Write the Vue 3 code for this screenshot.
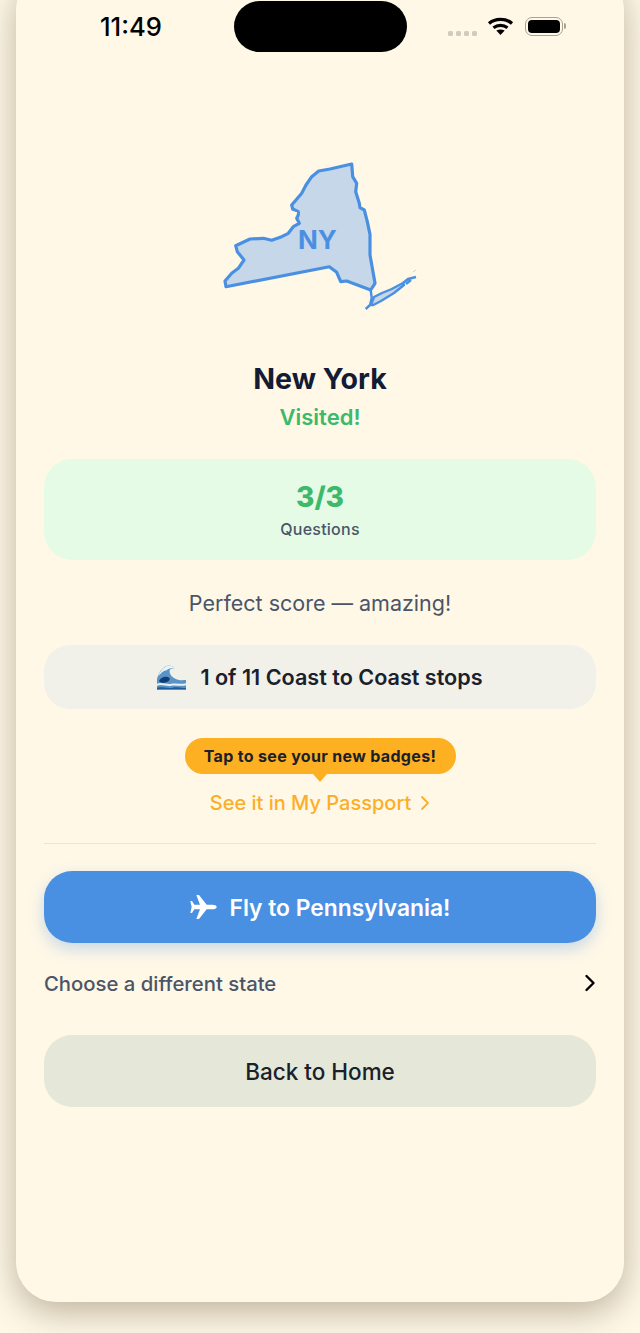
<template>
  <div class="page">
    <div class="phone">
      <div class="status-bar">
        <span class="time">11:49</span>
        <div class="island"></div>
        <div class="status-icons">
          <div class="dots"><i></i><i></i><i></i><i></i></div>
          <svg class="wifi" viewBox="0 0 27 18" fill="none" stroke="#000" stroke-width="3.2">
            <path d="M2 6.5C8 1 19 1 25 6.5" />
            <path d="M6.5 10.8C10.5 7.6 16.5 7.6 20.5 10.8" />
            <path d="M13.5 18L9.3 13.6C12 12 15 12 17.7 13.6Z" fill="#000" stroke="none" />
          </svg>
          <div class="battery"><div class="battery-fill"></div></div>
          <div class="battery-cap"></div>
        </div>
      </div>

      <div class="map">
        <svg viewBox="0 0 220 170" class="map-svg">
          <path
            class="state"
            d="M141.7 14L120 19L108.7 21L101.7 26.7L96 35L91.7 43.3L86 50L81.7 55L82.7 59L88.3 61.7L88.3 65L86.7 68.3L89.3 73.3L83.3 76.7L78.3 83.3L71.7 86.7L61.7 90.3L53.3 88.3L40 89L25.7 95.7L27.3 101.7L34 110L28.3 118.3L21.7 123.3L15 131L16 136.7L119.3 116.7L126.7 122.3L130.7 131.7L136.7 131L160.7 140L165 133.3L160 105L160 84.3L157.3 71.7L154.3 60L150 57.7L149.3 53.3L145.7 41.7L146.7 33.3L142.7 26.7Z"
          />
          <path class="island-fill" d="M161 155L164 147L172 143L181.7 139L193 133L194 135L184 143L171 151L163.3 155Z" />
          <path class="state-line" d="M193 133L198 129L206 127M196 134L201 130" />
          <path class="state-line" d="M160.7 140L161.7 148L160 155L155.7 159" />
          <path d="M78 61L87 63" stroke="#fff8e7" stroke-width="1.5" fill="none" />
          <path d="M203 122L206 120" stroke="#4a90e2" stroke-opacity="0.35" stroke-width="1" fill="none" />
        </svg>
        <span class="map-label">NY</span>
      </div>

      <h1 class="state-name">New York</h1>
      <p class="visited">Visited!</p>

      <div class="score">
        <div class="score-num">3/3</div>
        <div class="score-label">Questions</div>
      </div>

      <p class="message">Perfect score — amazing!</p>

      <div class="stops">
        <svg class="wave" viewBox="0 0 30 25">
          <path d="M0 25V14C2 7 6 1 12 0C15 0 17 1 18 3C15 2.5 13 4 13 6C13 10 17 14 23 15C26 15.5 28 15 30 15V25Z" fill="#5a94c6" />
          <path d="M1.5 11C3 6 7 1 12 0C15 0 17 1 18 3C15 2 12 3 10 5C7 5 4 8 1.5 11Z" fill="#eaf3f8" />
          <path d="M2 16C5 11 10 11 13 13C14 16 10 18 6 18C4 18 3 17 2 16Z" fill="#123c78" />
          <path d="M0 19C5 17 10 20 15 19C20 18 25 20 30 18.5V20.5C25 22 20 20 15 21C10 22 5 19 0 21Z" fill="#e6f1f8" />
          <path d="M0 23C6 21.5 10 24 16 23C21 22 26 24 30 23V25H0Z" fill="#1d5b9e" />
        </svg>
        <span>1 of 11 Coast to Coast stops</span>
      </div>

      <div class="tip">Tap to see your new badges!</div>
      <div class="passport">
        <span>See it in My Passport</span>
        <svg viewBox="0 0 10 16" class="passport-chev" fill="none" stroke="#FDAE27" stroke-width="1.8">
          <path d="M2 2L8 8L2 14" stroke-linecap="round" stroke-linejoin="round" />
        </svg>
      </div>

      <div class="divider"></div>

      <button class="fly">
        <svg viewBox="0 0 81 72" class="plane">
          <path fill="#fff" d="M80 36C80 31 74 29 66 29H50L27 0H19L30 29H13L6 18H1L5 36L1 54H6L13 43H30L19 72H27L50 43H66C74 43 80 41 80 36Z" />
        </svg>
        <span>Fly to Pennsylvania!</span>
      </button>

      <div class="choose">
        <span>Choose a different state</span>
        <svg viewBox="0 0 12 18" class="choose-chev" fill="none" stroke="#000" stroke-width="2.4">
          <path d="M2.5 2L9.5 9L2.5 16" stroke-linecap="round" stroke-linejoin="round" />
        </svg>
      </div>

      <button class="home">Back to Home</button>
    </div>
  </div>
</template>

<script setup>
</script>

<style>
html,
body {
  margin: 0;
  background: #fff8e7;
  overflow: hidden;
}
</style>

<style scoped>
.page {
  width: 640px;
  height: 1333px;
  overflow: hidden;
  background: #fff8e7;
  font-family: Inter, "Liberation Sans", sans-serif;
  color: #1a202c;
}

.phone {
  box-sizing: border-box;
  width: 608px;
  height: 1332px;
  margin: -30px 16px 0;
  padding: 31px 28px 0;
  background: #fff8e7;
  border-radius: 40px;
  box-shadow: 0 10px 34px rgba(60, 45, 15, 0.34);
  display: flex;
  flex-direction: column;
  align-items: center;
}

.status-bar {
  width: 100%;
  height: 51px;
  display: flex;
  align-items: center;
}

.time {
  width: 190px;
  padding-left: 56px;
  box-sizing: border-box;
  font-size: 25.6px;
  font-weight: 500;
  color: #000;
}

.island {
  width: 173px;
  height: 51px;
  border-radius: 26px;
  background: #000;
}

.status-icons {
  margin-left: 41px;
  display: flex;
  align-items: center;
}

.dots {
  display: flex;
  gap: 3px;
  margin-top: 13px;
  margin-right: 10px;
}

.dots i {
  width: 5px;
  height: 5px;
  border-radius: 1.5px;
  background: #d0cbbd;
}

.wifi {
  width: 27px;
  height: 18px;
  margin-right: 11px;
  margin-top: -1px;
}

.battery {
  box-sizing: border-box;
  width: 38px;
  height: 19px;
  padding: 2px;
  border: 1.5px solid #a8a294;
  border-radius: 7px;
  margin-top: -1px;
}

.battery-fill {
  height: 100%;
  border-radius: 4px;
  background: #000;
}

.battery-cap {
  width: 2px;
  height: 6px;
  margin-left: 1px;
  margin-top: -1px;
  border-radius: 0 2px 2px 0;
  background: #a8a294;
}

.map {
  position: relative;
  width: 220px;
  height: 170px;
  margin-top: 98px;
  margin-bottom: 39px;
  flex-shrink: 0;
}

.map-svg {
  display: block;
  width: 220px;
  height: 170px;
}

.state,
.island-fill {
  fill: #c6d7e9;
  stroke: #4a90e2;
  stroke-width: 3.2;
  stroke-linejoin: round;
}

.island-fill {
  stroke-width: 2.4;
}

.state-line {
  fill: none;
  stroke: #4a90e2;
  stroke-width: 2.4;
  stroke-linejoin: round;
}

.map-label {
  position: absolute;
  left: 88px;
  top: 75px;
  font-size: 26px;
  line-height: 30px;
  font-weight: 700;
  color: #4a90e2;
}

.state-name {
  margin: 0;
  font-size: 28.6px;
  line-height: 40px;
  font-weight: 700;
  color: #141b34;
}

.visited {
  margin: 0;
  font-size: 22px;
  line-height: 36px;
  font-weight: 600;
  color: #3cb96b;
}

.score {
  width: 100%;
  height: 101px;
  margin-top: 24px;
  box-sizing: border-box;
  padding-top: 21px;
  border-radius: 28px;
  background: #e6fbe6;
  text-align: center;
}

.score-num {
  font-size: 28px;
  line-height: 34px;
  font-weight: 800;
  color: #3cb96b;
}

.score-label {
  margin-top: 5px;
  font-size: 16px;
  line-height: 20px;
  font-weight: 500;
  letter-spacing: 0.25px;
  color: #4a5568;
}

.message {
  margin: 27px 0 0;
  font-size: 21.5px;
  line-height: 32px;
  color: #4a5568;
}

.stops {
  width: 100%;
  height: 64px;
  margin-top: 26px;
  border-radius: 26px;
  background: #f1f1e9;
  display: flex;
  align-items: center;
  justify-content: center;
  gap: 14px;
  font-size: 21.6px;
  font-weight: 600;
  color: #1a202c;
}

.wave {
  width: 29px;
  height: 25px;
}

.tip {
  position: relative;
  margin-top: 29px;
  width: 271px;
  height: 36px;
  border-radius: 18px;
  background: #fdb022;
  font-size: 16px;
  font-weight: 700;
  letter-spacing: 0.33px;
  line-height: 36px;
  text-align: center;
  color: #1a202c;
}

.tip::after {
  content: "";
  position: absolute;
  left: 50%;
  bottom: -8px;
  margin-left: -7px;
  border-left: 7px solid transparent;
  border-right: 7px solid transparent;
  border-top: 8px solid #fdb022;
}

.passport {
  margin-top: 16px;
  height: 26px;
  display: flex;
  align-items: center;
  gap: 9px;
  font-size: 20px;
  font-weight: 500;
  color: #fdae27;
}

.passport-chev {
  width: 10px;
  height: 16px;
}

.divider {
  width: 100%;
  height: 1px;
  margin-top: 27px;
  background: #ebe4d2;
}

.fly,
.home {
  width: 100%;
  height: 72px;
  flex-shrink: 0;
  border: 0;
  border-radius: 28px;
  font-family: inherit;
}

.fly {
  margin-top: 27px;
  background: #4a90e2;
  box-shadow: 0 6px 16px rgba(74, 144, 226, 0.3);
  color: #fff;
  font-size: 22.8px;
  font-weight: 600;
  display: flex;
  align-items: center;
  justify-content: center;
  gap: 13px;
}

.plane {
  width: 27px;
  height: 24px;
}

.choose {
  width: 100%;
  height: 40px;
  margin-top: 20px;
  display: flex;
  align-items: center;
  justify-content: space-between;
  font-size: 20.3px;
  font-weight: 500;
  color: #4a5568;
}

.choose-chev {
  width: 12px;
  height: 18px;
}

.home {
  margin-top: 32px;
  background: #e5e8d8;
  color: #1a202c;
  font-size: 22.5px;
  font-weight: 500;
}
</style>
